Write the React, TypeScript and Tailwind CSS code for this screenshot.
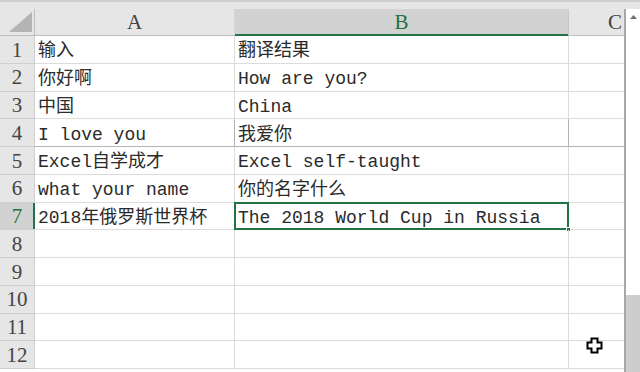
import React from "react";

const rows: [string, string][] = [
  ["输入", "翻译结果"],
  ["你好啊", "How are you?"],
  ["中国", "China"],
  ["I love you", "我爱你"],
  ["Excel自学成才", "Excel self-taught"],
  ["what your name", "你的名字什么"],
  ["2018年俄罗斯世界杯", "The 2018 World Cup in Russia"],
  ["", ""],
  ["", ""],
  ["", ""],
  ["", ""],
  ["", ""],
];

const cellFont = {
  fontFamily: '"Liberation Mono", "Noto Sans CJK SC", monospace',
};
const headFont = { fontFamily: '"Liberation Serif", serif' };

export default function App() {
  return (
    <div className="relative w-[640px] h-[372px] overflow-hidden bg-white">
      {/* strip above the headers */}
      <div className="h-[9px] bg-[#e6e6e6] border-t-2 border-[#d0d0d0]" />

      <div className="flex">
        <div className="w-[624px] flex flex-col">
          {/* column headers */}
          <div className="flex h-[27px] bg-[#e6e6e6] border-b border-[#bdbdbd]" style={headFont}>
            <div className="w-[35px] border-r border-[#bdbdbd] flex items-end justify-end pr-[2px] pb-[3px]">
              <svg width="23" height="20" viewBox="0 0 23 20">
                <polygon points="23,0 23,20 0,20" fill="#b4b4b4" />
              </svg>
            </div>
            <div className="w-[200px] border-r border-[#d4d4d4] flex items-center justify-center pt-[2px] text-[21px] text-[#444]">
              A
            </div>
            <div className="relative w-[334px] bg-[#d2d2d2] border-r border-[#c8c8c8] flex items-center justify-center pt-[2px] text-[21px] text-[#217346]">
              B
              <div className="absolute left-0 right-0 -bottom-px h-[2px] bg-[#217346]" />
            </div>
            <div className="flex-1 flex items-center justify-end pr-[2px] pt-[2px] text-[21px] text-[#444]">C</div>
          </div>

          {/* rows */}
          {rows.map(([a, b], i) => {
            const sel = i === 6;
            const line = i === 3 ? "border-[#b4b4b4]" : "border-[#dcdcdc]";
            return (
              <div key={i} className="flex h-[27.75px]">
                <div
                  className={`relative w-[35px] flex items-center justify-center pt-[2px] text-[21px] border-b border-r border-[#cfcfcf] ${
                    sel ? "bg-[#d2d2d2] text-[#217346]" : "bg-[#e6e6e6] text-[#444]"
                  }`}
                  style={headFont}
                >
                  {i + 1}
                  {sel && <div className="absolute top-0 bottom-0 -right-px w-[2px] bg-[#217346]" />}
                </div>
                <div
                  className={`w-[200px] whitespace-nowrap overflow-visible flex items-center pl-[3px] pt-[5px] text-[18px] text-[#2a2a2a] border-b border-r ${line}`}
                  style={cellFont}
                >
                  {a}
                </div>
                <div
                  className={`relative w-[334px] whitespace-nowrap flex items-center pl-[3px] pt-[5px] text-[18px] text-[#2a2a2a] border-b border-r ${line}`}
                  style={cellFont}
                >
                  {b}
                  {sel && (
                    <>
                      <div className="absolute -left-[1px] -top-[1px] -right-[1px] -bottom-[1px] border-2 border-[#217346]" />
                      <div className="absolute -right-[3px] -bottom-[3px] w-[5px] h-[5px] bg-[#217346] border border-white" />
                    </>
                  )}
                </div>
                <div className={`flex-1 border-b ${line}`} />
              </div>
            );
          })}
        </div>

        {/* vertical scrollbar */}
        <div className="w-[16px] h-[363px] flex flex-col border-l-2 border-[#a8a8a8] bg-white">
          <div className="h-[16px] flex items-center justify-center">
            <svg width="7" height="4" viewBox="0 0 7 4">
              <polygon points="3.5,0 7,4 0,4" fill="#707070" />
            </svg>
          </div>
          <div className="h-[270px]" />
          <div className="flex-1 bg-[#cdcdcd]" />
        </div>
      </div>

      {/* mouse cursor */}
      <svg className="absolute left-[586px] top-[337px]" width="17" height="17" viewBox="0 0 17 17">
        <path
          d="M5.5 1.5h6v4h4v6h-4v4h-6v-4h-4v-6h4z"
          fill="#fff"
          stroke="#000"
          strokeWidth="2"
        />
      </svg>
    </div>
  );
}
